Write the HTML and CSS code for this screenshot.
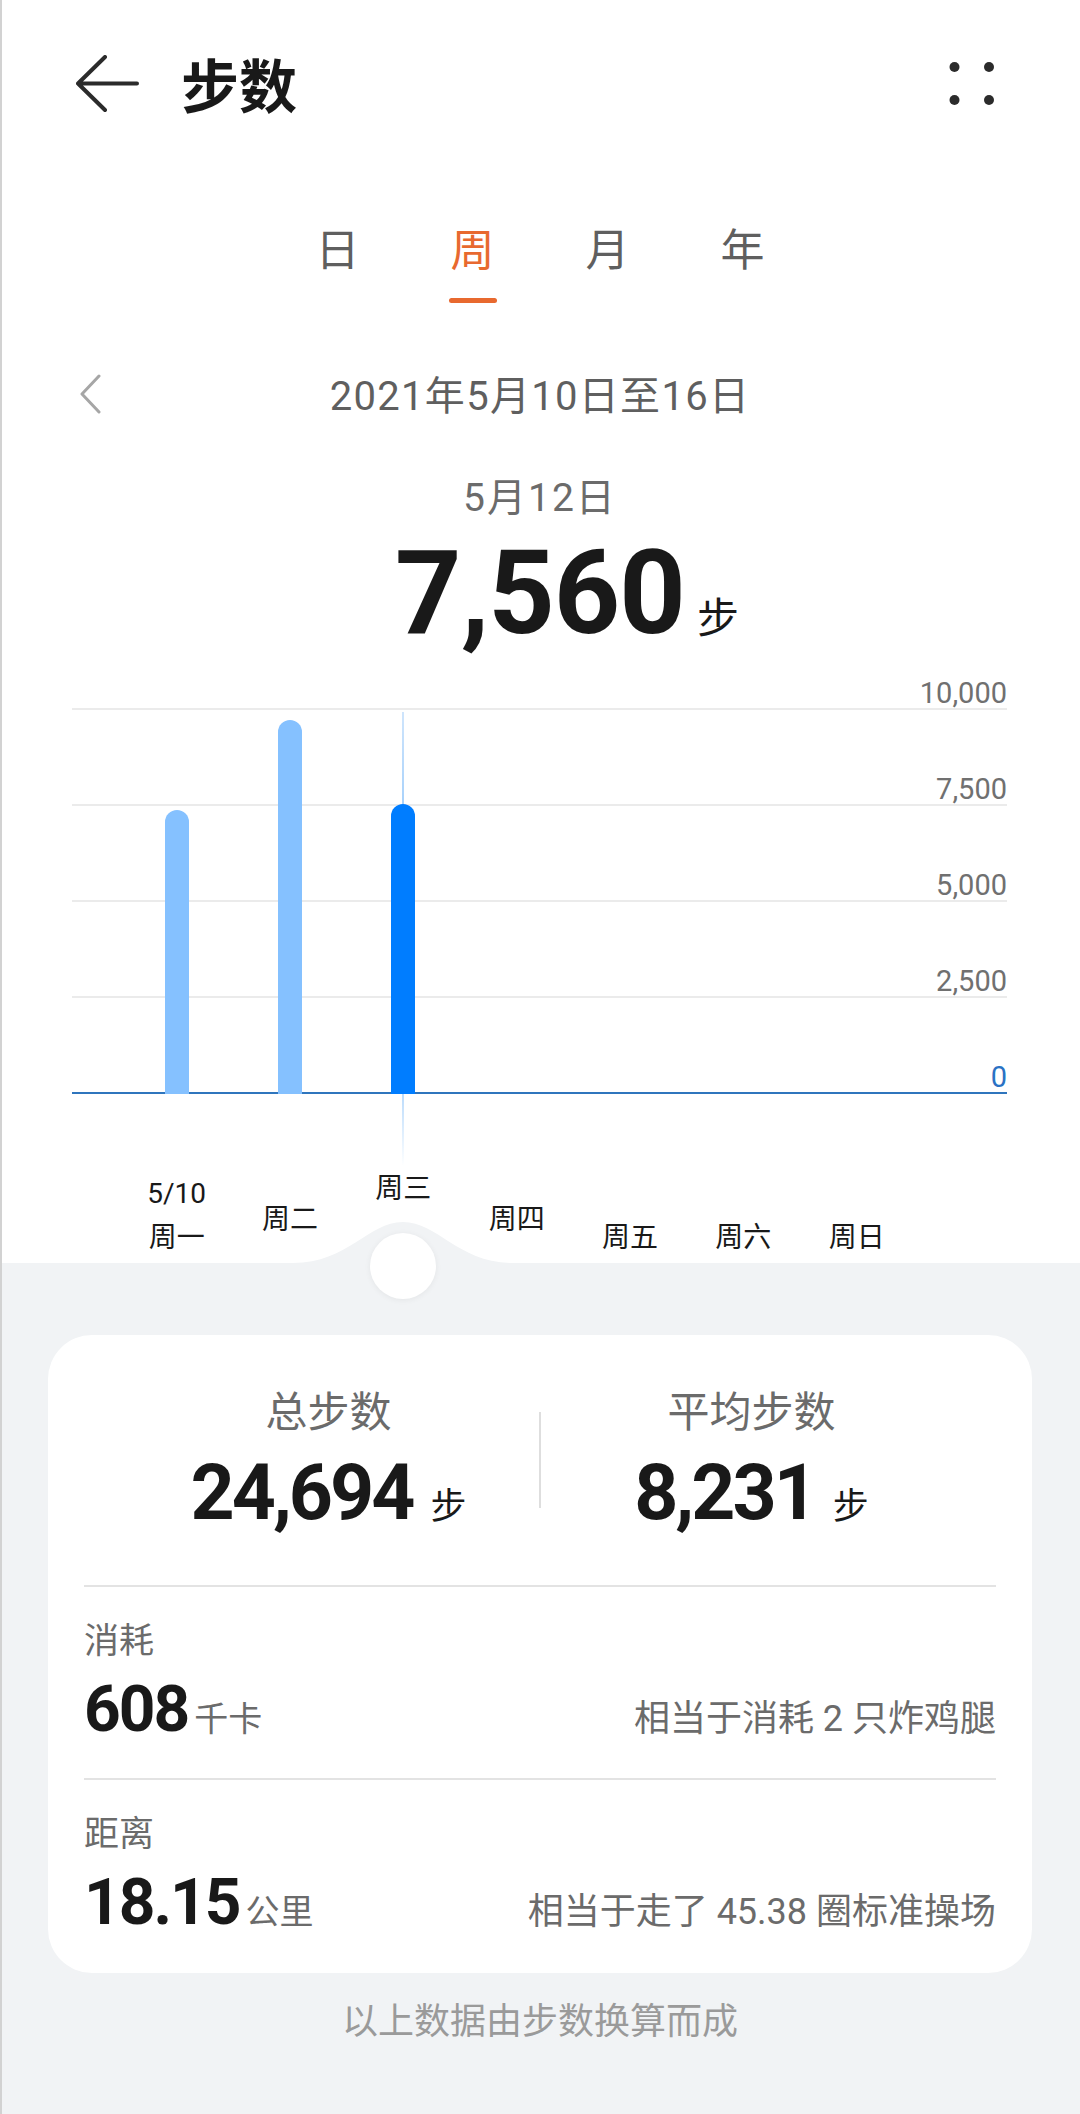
FILE: index.html
```html
<!DOCTYPE html>
<html lang="zh-CN">
<head>
    <meta charset="UTF-8">
    <title>步数</title>
    <link rel="stylesheet" href="styles.css">
</head>
<body>
<div class="page">
    <header class="topbar">
        <svg class="icon-back" width="63" height="58" viewBox="0 0 63 58">
            <path d="M29 2 L2 28.5 L29 55 M2 28.5 H61" fill="none" stroke="#2b2b2b" stroke-width="4" stroke-linecap="round" stroke-linejoin="round"/>
        </svg>
        <h1 class="title">步数</h1>
        <svg class="icon-more" width="50" height="48" viewBox="0 0 50 48">
            <circle cx="7.5" cy="7" r="5" fill="#2b2b2b"/>
            <circle cx="42" cy="7" r="5" fill="#2b2b2b"/>
            <circle cx="7.5" cy="40" r="5" fill="#2b2b2b"/>
            <circle cx="42" cy="40" r="5" fill="#2b2b2b"/>
        </svg>
    </header>

    <nav class="tabs">
        <div class="tab">日<i></i></div>
        <div class="tab active">周<i></i></div>
        <div class="tab">月<i></i></div>
        <div class="tab">年<i></i></div>
    </nav>

    <div class="range">
        <svg class="icon-prev" width="26" height="40" viewBox="0 0 26 40">
            <path d="M21 2 L4 20 L21 38" fill="none" stroke="#a6a6a6" stroke-width="3" stroke-linecap="round" stroke-linejoin="round"/>
        </svg>
        <span class="range-text">2021年5月10日至16日</span>
        <span></span>
    </div>

    <div class="current">
        <div class="cur-date">5月12日</div>
        <div class="cur-value"><span class="cur-num">7,560</span><span class="cur-unit">步</span></div>
    </div>

    <!-- 柱状图：网格线和柱子叠在同一个格子里 -->
    <div class="chart">
        <div class="grid-lines">
            <div class="gl first"><span>10,000</span></div>
            <div class="gl"><span>7,500</span></div>
            <div class="gl"><span>5,000</span></div>
            <div class="gl"><span>2,500</span></div>
            <div class="gl base"><span>0</span></div>
        </div>
        <div class="bars">
            <div class="col"><div class="bar" style="height:284px"></div></div>
            <div class="col"><div class="bar" style="height:374px"></div></div>
            <div class="col sel"><div class="bar" style="height:290px"></div></div>
            <div class="col"></div>
            <div class="col"></div>
            <div class="col"></div>
            <div class="col"></div>
        </div>
    </div>

    <div class="days">
        <div class="day"><span class="day-date">5/10</span>周一</div>
        <div class="day lift1">周二</div>
        <div class="day lift2">周三</div>
        <div class="day lift1">周四</div>
        <div class="day">周五</div>
        <div class="day">周六</div>
        <div class="day">周日</div>
    </div>

    <section class="summary">
        <svg class="hill" width="220" height="44" viewBox="0 0 220 44">
            <path d="M0 42 C55 42 75 1 110 1 C145 1 165 42 220 42 L220 44 L0 44 Z" fill="#f1f3f5"/>
        </svg>
        <div class="knob"></div>

        <div class="card">
            <div class="stats">
                <div class="stat">
                    <div class="stat-label">总步数</div>
                    <div class="stat-value"><span class="stat-num">24,694</span><span class="stat-unit">步</span></div>
                </div>
                <div class="stat-divider"></div>
                <div class="stat">
                    <div class="stat-label">平均步数</div>
                    <div class="stat-value"><span class="stat-num">8,231</span><span class="stat-unit">步</span></div>
                </div>
            </div>

            <div class="metric">
                <div class="metric-label">消耗</div>
                <div class="metric-row">
                    <span class="metric-num">608</span><span class="metric-unit">千卡</span>
                    <span class="metric-note">相当于消耗 2 只炸鸡腿</span>
                </div>
            </div>

            <div class="metric">
                <div class="metric-label">距离</div>
                <div class="metric-row">
                    <span class="metric-num">18.15</span><span class="metric-unit">公里</span>
                    <span class="metric-note">相当于走了 45.38 圈标准操场</span>
                </div>
            </div>
        </div>

        <p class="footnote">以上数据由步数换算而成</p>
    </section>
</div>
</body>
</html>
```

FILE: styles.css
```css
* {
    box-sizing: border-box;
}
body {
    margin: 0;
    background: #f1f3f5;
    font-family: "Roboto", "Noto Sans CJK SC", sans-serif;
    color: #191919;
}
.page {
    min-height: 2114px;
    display: flex;
    flex-direction: column;
    background: #ffffff;
}
.page::before {
    content: "";
    position: fixed;        /* 截图左侧那条细灰线 */
    left: 0;
    top: 0;
    bottom: 0;
    width: 2px;
    background: #d2d2d2;
    z-index: 10;
}

/* 顶栏 */
.topbar {
    height: 176px;
    display: flex;
    align-items: center;
    padding: 0 83px 0 76px;
}
.icon-back,
.icon-more {
    margin-bottom: 9px;
}
.title {
    margin: 0 0 0 42px;
    font-size: 58px;
    line-height: 1;
    font-weight: 700;
    color: #191919;
}
.icon-more {
    margin-left: auto;
}

/* 日 周 月 年 */
.tabs {
    display: flex;
    justify-content: center;
    margin-top: 47px;
}
.tab {
    width: 135px;
    display: flex;
    flex-direction: column;
    align-items: center;
    font-size: 44px;
    line-height: 57px;
    color: #5f5f5f;
}
.tab i {
    width: 48px;
    height: 5px;
    margin-top: 18px;
    border-radius: 3px;
}
.tab.active {
    color: #e8692f;
}
.tab.active i {
    background: #e8692f;
}

/* 日期范围 */
.range {
    display: grid;
    grid-template-columns: 1fr auto 1fr;
    align-items: center;
    margin-top: 69px;
    height: 50px;
}
.icon-prev {
    margin-left: 78px;
    margin-top: -6px;
}
.range-text {
    font-size: 40px;
    line-height: 50px;
    letter-spacing: 1.3px;
    color: #5f5f5f;
}

/* 当前选中 */
.current {
    display: flex;
    flex-direction: column;
    align-items: center;
    margin-top: 53px;
}
.cur-date {
    font-size: 39px;
    line-height: 46px;
    letter-spacing: 2px;
    color: #6b6b6b;
}
.cur-value {
    display: flex;
    align-items: baseline;
    margin-top: 14px;
}
.cur-num {
    font-size: 116px;
    line-height: 1;
    font-weight: 700;
    letter-spacing: -1px;
}
.cur-unit {
    font-size: 42px;
    margin-left: 12px;
    margin-right: -54px;   /* 数字本身居中 */
}

/* 图表 */
.chart {
    display: grid;
    margin: 21px 73px 0 72px;
}
.grid-lines,
.bars {
    grid-area: 1 / 1;
}
.gl {
    height: 96px;
    display: flex;
    justify-content: flex-end;
    align-items: flex-end;
    border-bottom: 2px solid #ebebeb;
    font-size: 29px;
    line-height: 1;
    color: #707070;
}
.gl.first {
    height: 38px;
}
.gl.base {
    border-bottom-color: #2f75bd;
    color: #2a72c4;
}
.bars {
    display: grid;
    grid-template-columns: repeat(7, 113.33px);
    padding-left: 48px;
}
.col {
    position: relative;
    display: flex;
    justify-content: center;
    align-items: flex-end;
}
.bar {
    position: relative;
    width: 24px;
    border-radius: 12px 12px 0 0;
    background: #85c1ff;
}
.col.sel .bar {
    background: #007dff;
}
.col.sel::before {
    content: "";
    position: absolute;     /* 选中游标线 */
    left: calc(50% - 1px);
    top: 40px;
    bottom: -72px;
    width: 2px;
    background: linear-gradient(#cfe5fc, #a9d2fb 20%, #a9d2fb 80%, rgba(169, 210, 251, 0));
}

/* 星期标签 */
.days {
    display: grid;
    grid-template-columns: repeat(7, 113.33px);
    align-items: end;
    height: 169px;
    margin-left: 120px;
    padding-bottom: 7px;
}
.day {
    display: flex;
    flex-direction: column;
    align-items: center;
    font-size: 28px;
    line-height: 36px;
    color: #191919;
}
.day-date {
    margin-bottom: 8px;
}
.day.lift1 {
    margin-bottom: 18px;
}
.day.lift2 {
    margin-bottom: 49px;
}

/* 下方汇总 */
.summary {
    position: relative;
    flex: 1;
    background: #f1f3f5;
    padding: 72px 48px 40px;
}
.hill {
    position: absolute;
    left: 293px;
    top: -42px;
}
.knob {
    position: absolute;
    left: 370px;
    top: -30px;
    width: 66px;
    height: 66px;
    border-radius: 50%;
    background: #ffffff;
    box-shadow: 0 1px 6px rgba(0, 0, 0, 0.06);
}
.card {
    background: #ffffff;
    border-radius: 44px;
    padding: 53px 36px 38px;
}
.stats {
    display: grid;
    grid-template-columns: 1fr 2px 1fr;
    align-items: center;
    padding: 0 34px 53px;
}
.stat {
    display: flex;
    flex-direction: column;
    align-items: center;
}
.stat-label {
    font-size: 42px;
    line-height: 50px;
    color: #6b6b6b;
}
.stat-value {
    display: flex;
    align-items: baseline;
    margin-top: 17px;
}
.stat-num {
    font-size: 77px;
    line-height: 1;
    font-weight: 700;
    letter-spacing: -3px;
}
.stat-unit {
    font-size: 36px;
    margin-left: 18px;
}
.stat-divider {
    width: 2px;
    height: 96px;
    background: #dedede;
}
.metric {
    border-top: 2px solid #e3e3e3;
    padding: 32px 0 36px;
}
.metric + .metric {
    padding-bottom: 0;
}
.metric-label {
    font-size: 35px;
    line-height: 45px;
    color: #6b6b6b;
}
.metric-row {
    display: flex;
    align-items: baseline;
    margin-top: 14px;
}
.metric-num {
    font-size: 64px;
    line-height: 1;
    font-weight: 700;
    letter-spacing: -2px;
}
.metric-unit {
    font-size: 34px;
    margin-left: 6px;
    color: #6b6b6b;
}
.metric-note {
    margin-left: auto;
    font-size: 36px;
    line-height: 45px;
    color: #6b6b6b;
}
.footnote {
    margin: 26px 0 0;
    text-align: center;
    font-size: 36px;
    line-height: 46px;
    color: #9a9a9a;
}
```
